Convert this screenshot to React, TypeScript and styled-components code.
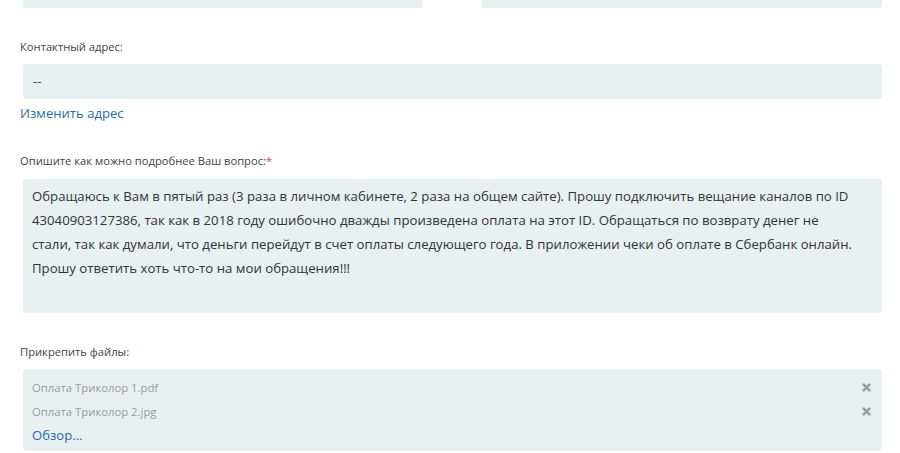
import React from "react";
import styled, { createGlobalStyle } from "styled-components";

const Global = createGlobalStyle`
  html, body { margin: 0; padding: 0; background: #fff; }
  body { font-family: "Open Sans", "Noto Sans", sans-serif; color: #333; }
`;

const Page = styled.div`
  width: 900px;
  height: 453px;
  overflow: hidden;
  padding: 0 18px 0 20px;
  box-sizing: border-box;
`;

const TopRow = styled.div`
  display: grid;
  grid-template-columns: 400px 401px;
  column-gap: 58px;
  margin-left: 3px;
`;

const TopBox = styled.div`
  height: 8px;
  background: #e8f0f2;
  border-radius: 0 0 3px 3px;
`;

const Label = styled.div<{ $mt: number }>`
  margin-top: ${(p) => p.$mt}px;
  font-size: 11.2px;
  line-height: 15px;
  color: #444;
  height: 15px;
`;

const Star = styled.span`
  color: #e2483d;
`;

const Box = styled.div<{ $mt?: number; $h?: number }>`
  margin-left: 3px;
  margin-top: ${(p) => p.$mt ?? 0}px;
  background: #e8f0f2;
  border-radius: 3px;
  box-sizing: border-box;
  ${(p) => (p.$h ? `height: ${p.$h}px;` : "")}
`;

const InputText = styled.div`
  padding: 0 10px;
  line-height: 35px;
  font-size: 13px;
  color: #444;
`;

const Link = styled.a<{ $mt?: number }>`
  display: block;
  margin-top: ${(p) => p.$mt ?? 0}px;
  color: #2a6aa6;
  font-size: 13.1px;
  line-height: 20px;
  text-decoration: none;
`;

const Text = styled.div`
  padding: 5px 10px 0 9px;
  font-size: 13.2px;
  line-height: 24px;
  color: #333;
`;

const TextLine = styled.div`
  white-space: nowrap;
`;

const FilesBox = styled(Box)`
  padding: 6px 11px 0 9px;
  height: 82px;
`;

const FileRow = styled.div`
  display: flex;
  align-items: center;
  justify-content: space-between;
  height: 24px;
  font-size: 11.3px;
  color: #9a9a9a;
`;

const Remove = styled.span`
  display: inline-flex;
  width: 9px;
  height: 9px;
`;

const BrowseLink = styled(Link)`
  line-height: 24px;
`;

const XIcon = () => (
  <svg width="9" height="9" viewBox="0 0 9 9">
    <path d="M1.6 1.6 L7.4 7.4 M7.4 1.6 L1.6 7.4" stroke="#9a9a9a" strokeWidth="2.5" strokeLinecap="round" />
  </svg>
);

const lines = [
  "Обращаюсь к Вам в пятый раз (3 раза в личном кабинете, 2 раза на общем сайте). Прошу подключить вещание каналов по ID",
  "43040903127386, так как в 2018 году ошибочно дважды произведена оплата на этот ID. Обращаться по возврату денег не",
  "стали, так как думали, что деньги перейдут в счет оплаты следующего года. В приложении чеки об оплате в Сбербанк онлайн.",
  "Прошу ответить хоть что-то на мои обращения!!!",
];

const files = ["Оплата Триколор 1.pdf", "Оплата Триколор 2.jpg"];

export default function App() {
  return (
    <Page>
      <Global />
      <TopRow>
        <TopBox />
        <TopBox />
      </TopRow>
      <Label $mt={31}>Контактный адрес:</Label>
      <Box $mt={10} $h={35}>
        <InputText>--</InputText>
      </Box>
      <Link href="#" $mt={4}>Изменить адрес</Link>
      <Label $mt={30}>
        Опишите как можно подробнее Ваш вопрос:<Star>*</Star>
      </Label>
      <Box $mt={11} $h={134}>
        <Text>
          {lines.map((l) => (
            <TextLine key={l}>{l}</TextLine>
          ))}
        </Text>
      </Box>
      <Label $mt={31}>Прикрепить файлы:</Label>
      <FilesBox $mt={10}>
        {files.map((f) => (
          <FileRow key={f}>
            {f}
            <Remove><XIcon /></Remove>
          </FileRow>
        ))}
        <BrowseLink href="#">Обзор...</BrowseLink>
      </FilesBox>
    </Page>
  );
}
